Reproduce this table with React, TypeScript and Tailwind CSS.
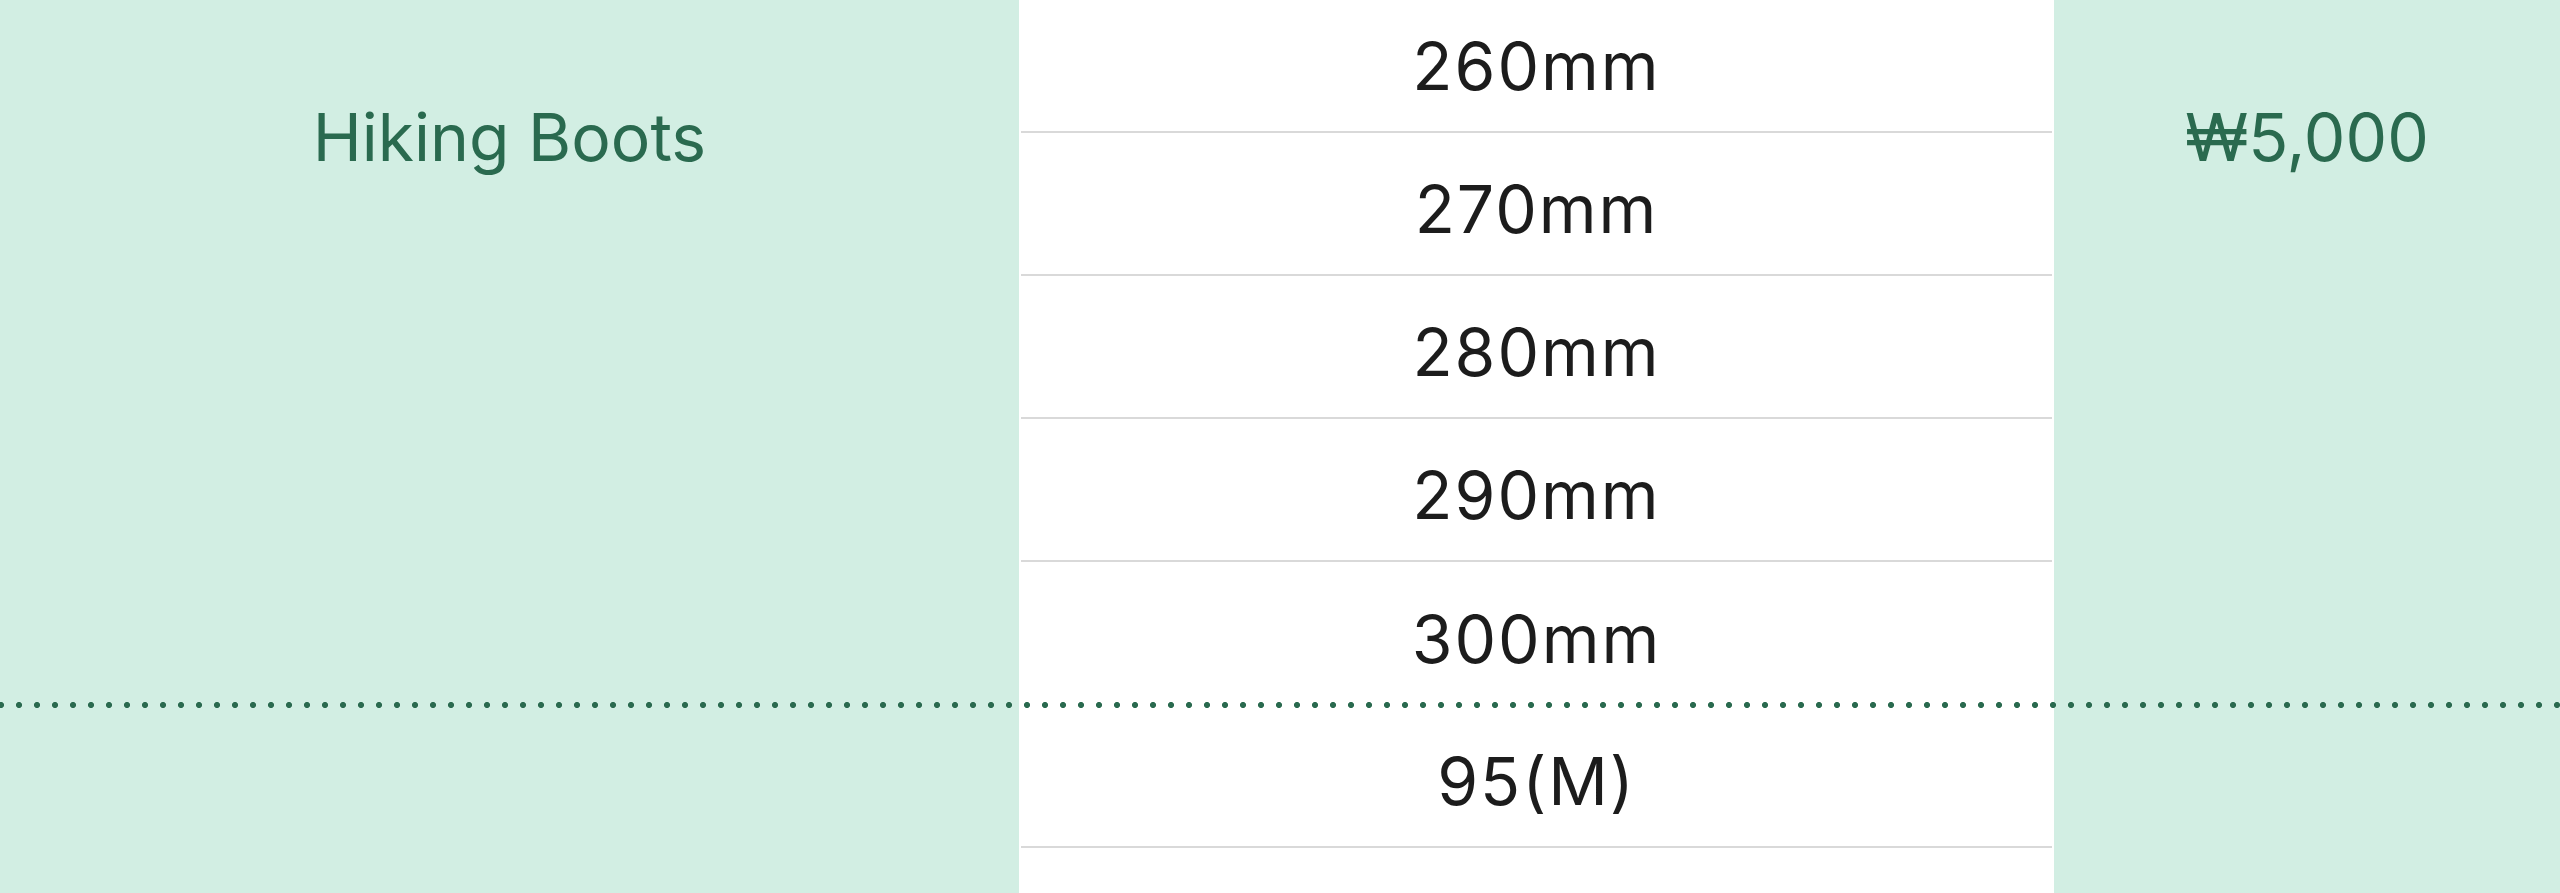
import React from 'react';

interface Product {
  name: string;
  price: string;
  sizes: string[];
}

const PRODUCTS: Product[] = [
  {
    name: 'Hiking Boots',
    price: '₩5,000',
    sizes: ['230mm', '240mm', '250mm', '260mm', '270mm', '280mm', '290mm', '300mm'],
  },
  {
    name: 'Rain Jacket',
    price: '₩3,000',
    sizes: ['95(M)', '100(L)', '105(XL)', '110(XXL)'],
  },
];

function ProductGroup({ product }: { product: Product }) {
  return (
    <div className="grid grid-cols-[1019px_1035px_1fr]">
      <div className="flex items-center justify-center bg-[#d2eee3] pt-[8px] text-[#2a6a4f]">
        {product.name}
      </div>
      <div className="flex flex-col bg-white px-[2px]">
        {product.sizes.map((size) => (
          <div
            key={size}
            className="flex h-[143px] items-center justify-center border-b-2 border-[#d9d9d9] pt-[11px] tracking-[0.03em] text-[#1c1c1c] last:border-b-0"
          >
            {size}
          </div>
        ))}
      </div>
      <div className="flex items-center justify-center bg-[#d2eee3] pt-[8px] text-[#2a6a4f]">
        {product.price}
      </div>
    </div>
  );
}

export default function App() {
  return (
    <div className="h-screen overflow-hidden bg-white font-['Inter',sans-serif] text-[66px] leading-none">
      <div className="-mt-[439px]">
        {PRODUCTS.map((product, i) => (
          <div key={product.name}>
            {i > 0 && (
              <div className="relative z-10 -my-[3px] h-[6px] bg-[radial-gradient(circle,#2a6a4f_2.75px,transparent_3.25px)] bg-[length:18px_6px] bg-[position:-8px_0] bg-repeat-x" />
            )}
            <ProductGroup product={product} />
          </div>
        ))}
      </div>
    </div>
  );
}
